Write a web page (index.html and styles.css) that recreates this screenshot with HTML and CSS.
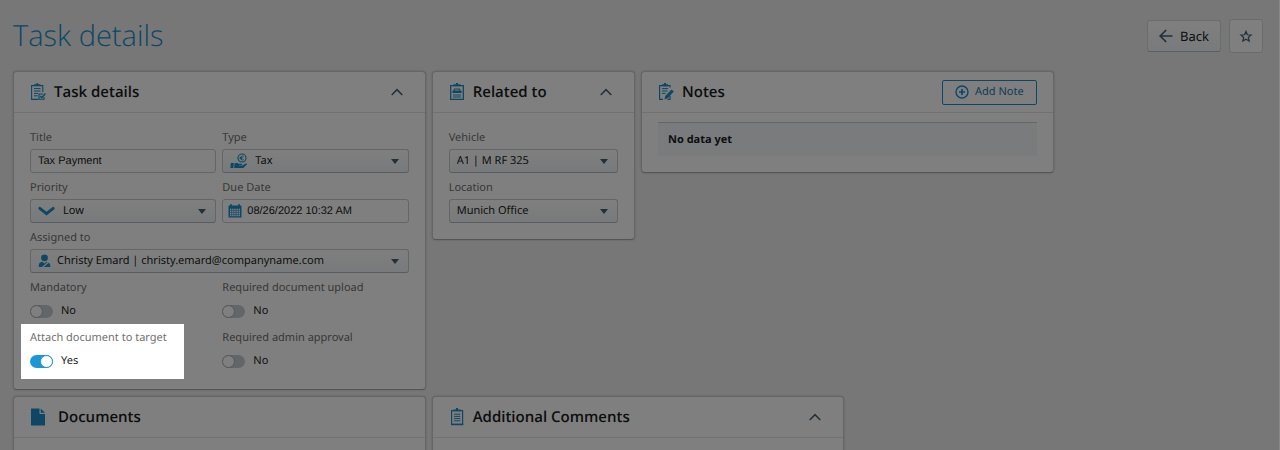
FILE: index.html
```html
<!DOCTYPE html>
<html lang="en">
<head>
<meta charset="utf-8">
<title>Task details</title>
<link rel="stylesheet" href="styles.css">
</head>
<body>
<main class="page">
  <header class="page-header">
    <h1 class="page-title">Task details</h1>
    <div class="page-actions">
      <button class="btn btn-back" type="button">
        <svg width="14" height="14" viewBox="0 0 14 14" fill="none" stroke="#456074" stroke-width="1.7"><path d="M13.5 7H1.2M7.2 1L1.2 7l6 6"/></svg>
        Back
      </button>
      <button class="btn btn-star" type="button" aria-label="Favourite">
        <svg width="14" height="14" viewBox="0 0 14 14" fill="none" stroke="#456074" stroke-width="1.2" stroke-linejoin="miter"><path d="M7 2.400l1.400 3.400 3.700.3-2.800 2.400.9 3.600L7 10.200l-3.200 1.900.9-3.600L1.900 6.100l3.700-.3z"/></svg>
      </button>
    </div>
  </header>

  <div class="cards">
    <section class="card card-wide">
      <header class="card-header">
        <svg class="card-icon" width="16" height="18" viewBox="0 0 16 18" fill="none" stroke="#1a8fcb" stroke-width="1.1"><path d="M8.500 16.400H1.600V2.600h11.200V9"/><path d="M4 2.200h6.400M6.200 1h2" stroke-width="1.700"/><path d="M4 5.600h6.500M4 8h6.500M4 10.400h4M4 12.800h3.500" stroke-width="1"/><path d="M13 11H9v5.300h5V14"/><path d="M10.200 13l1.600 1.700 3.600-4.200" stroke-width="1.400"/></svg>
        <h2 class="card-title">Task details</h2>
        <button class="collapse" type="button" aria-label="Collapse task details"><svg width="12" height="8" viewBox="0 0 12 8"><path d="M.7 7L6 1.6 11.3 7"/></svg></button>
      </header>
      <div class="card-body fields">
        <div class="field">
          <label class="label" for="title">Title</label>
          <input class="control plain" id="title" type="text" value="Tax Payment">
        </div>
        <div class="field">
          <label class="label" for="type">Type</label>
          <div class="control-wrap">
            <svg class="control-icon" width="18" height="16" viewBox="0 0 18 16"><circle cx="12" cy="5" r="4" fill="none" stroke="#1a8fcb" stroke-width="1.1"/><path d="M13.7 3.4a2 2 0 1 0 0 3.2M9.7 4.6h3M9.7 5.6h2.6" fill="none" stroke="#1a8fcb" stroke-width=".9"/><path d="M.8 10h3.1l-.5 5H.3zM4.5 10.4c2-1 3.1-.4 4.4.4h2.7c.9.1.8 1.2 0 1.3H9v.5h3.4l3.4-2c1-.4 1.5.4.8 1.1L13.3 15H4.2z" fill="#1a8fcb"/></svg>
            <select class="control select has-wide-icon" id="type"><option>Tax</option></select>
          </div>
        </div>
        <div class="field">
          <label class="label" for="priority">Priority</label>
          <div class="control-wrap">
            <svg class="control-icon" width="17" height="16" viewBox="0 0 17 16" fill="none" stroke="#1a8fcb" stroke-width="2.800"><path d="M1.800 5.300l6.700 5.400 6.700-5.400" stroke-linejoin="miter" stroke-linecap="round"/></svg>
            <select class="control select has-wide-icon" id="priority"><option>Low</option></select>
          </div>
        </div>
        <div class="field">
          <label class="label" for="due">Due Date</label>
          <div class="control-wrap">
            <svg class="control-icon calendar" width="14" height="14" viewBox="0 0 14 14"><path d="M.5 1.5h13v12H.5z" fill="#1a8fcb"/><path d="M3 0v3M11 0v3" stroke="#1a8fcb" stroke-width="1.5"/><path d="M2 5.500h10M2 7.500h10M2 9.500h10M2 11.500h10" stroke="#fff" stroke-width="1.300" stroke-dasharray="1.400 .750"/></svg>
            <input class="control plain has-icon" id="due" type="text" value="08/26/2022 10:32 AM">
          </div>
        </div>
        <div class="field field-full">
          <label class="label" for="assignee">Assigned to</label>
          <div class="control-wrap">
            <svg class="control-icon" width="14" height="14" viewBox="0 0 14 14" fill="#1a8fcb"><circle cx="6.500" cy="3.800" r="3.400"/><path d="M.8 13c-.3-3.500 1-5 3.500-5.200l2.200 1.700 2.200-1.700 1 .2L4 13zM5.800 13l5-4.300c1.200.8 1.600 2.200 1.500 4.300z"/></svg>
            <select class="control select has-icon" id="assignee"><option>Christy Emard | christy.emard@companyname.com</option></select>
          </div>
        </div>
        <div class="field">
          <span class="label" id="mandatory-label">Mandatory</span>
          <label class="switch"><input type="checkbox" role="switch" class="toggle" aria-labelledby="mandatory-label">No</label>
        </div>
        <div class="field">
          <span class="label" id="upload-label">Required document upload</span>
          <label class="switch"><input type="checkbox" role="switch" class="toggle" aria-labelledby="upload-label">No</label>
        </div>
        <div class="field spotlight">
          <span class="label" id="attach-label">Attach document to target</span>
          <label class="switch"><input type="checkbox" role="switch" class="toggle" aria-labelledby="attach-label" checked>Yes</label>
        </div>
        <div class="field">
          <span class="label" id="approval-label">Required admin approval</span>
          <label class="switch"><input type="checkbox" role="switch" class="toggle" aria-labelledby="approval-label">No</label>
        </div>
      </div>
    </section>

    <section class="card">
      <header class="card-header">
        <svg class="card-icon" width="16" height="18" viewBox="0 0 16 18" fill="none" stroke="#1a8fcb" stroke-width="1.3"><path d="M1.700 2.600h12.600v13.800H1.700z"/><path d="M4.500 2.300h7M7 1h2" stroke-width="2"/><path d="M5.300 5.500h5.400l1.100 1.900.8.600v2H3.400V8l.8-.6z" fill="#1a8fcb" stroke="none"/><path d="M6 6.500h4l.5 1h-5z" fill="#fff" stroke="none"/><path d="M4 12h8M4 14h8" stroke-width="1"/></svg>
        <h2 class="card-title">Related to</h2>
        <button class="collapse" type="button" aria-label="Collapse related to"><svg width="12" height="8" viewBox="0 0 12 8"><path d="M.7 7L6 1.6 11.3 7"/></svg></button>
      </header>
      <div class="card-body fields">
        <div class="field field-full">
          <label class="label" for="vehicle">Vehicle</label>
          <div class="control-wrap"><select class="control select" id="vehicle"><option>A1 | M RF 325</option></select></div>
        </div>
        <div class="field field-full">
          <label class="label" for="location">Location</label>
          <div class="control-wrap"><select class="control select" id="location"><option>Munich Office</option></select></div>
        </div>
      </div>
    </section>

    <section class="card card-wide">
      <header class="card-header">
        <svg class="card-icon" width="16" height="18" viewBox="0 0 16 18" fill="none" stroke="#1a8fcb" stroke-width="1.200"><path d="M12 4.500V2.600H1.600v13.800H5M9.500 16.400H12V13"/><path d="M4 2.200h6M6 1h2" stroke-width="2"/><path d="M4 5.600h6M4 8h5.500M4 10.400h3.500" stroke-width="1"/><path d="M13.500 6.500l2.300 2-6 6.700-3.300 1.300.8-3.400z" fill="#1a8fcb" stroke="none"/></svg>
        <h2 class="card-title">Notes</h2>
        <button class="btn-outline" type="button">
          <svg width="14" height="14" viewBox="0 0 14 14" fill="none" stroke="#1a8fcb" stroke-width="1.400"><circle cx="7" cy="7" r="6"/><path d="M7 4v6M4 7h6" stroke-width="1.700"/></svg>
          Add Note
        </button>
      </header>
      <div class="card-body notes-body">
        <p class="empty">No data yet</p>
      </div>
    </section>

    <section class="card card-wide">
      <header class="card-header documents-header">
        <svg class="card-icon" width="16" height="18" viewBox="0 0 16 18" fill="#1a8fcb"><path d="M1 .500h8.500V6H15v11.500H1z"/><path d="M10.700.500L15 4.800h-4.300z"/></svg>
        <h2 class="card-title">Documents</h2>
      </header>
      <div class="card-body"></div>
    </section>

    <section class="card card-wide">
      <header class="card-header">
        <svg class="card-icon" width="16" height="18" viewBox="0 0 16 18" fill="none" stroke="#1a8fcb" stroke-width="1.200"><path d="M2.600 2.600h11v13.800h-11z"/><path d="M2 16.500h12.200" stroke-width="1.500"/><path d="M4.500 2.300h7.200M7 1h2" stroke-width="1.800"/><path d="M5 6.200h6.300M5 8.400h6.300M5 10.600h6.300M5 12.800h6.300" stroke-width="1"/></svg>
        <h2 class="card-title">Additional Comments</h2>
        <button class="collapse" type="button" aria-label="Collapse additional comments"><svg width="12" height="8" viewBox="0 0 12 8"><path d="M.7 7L6 1.600 11.300 7"/></svg></button>
      </header>
      <div class="card-body"></div>
    </section>
  </div>
</main>
</body>
</html>
```

FILE: styles.css
```css
*,
*::before,
*::after {
  box-sizing: border-box;
}

body {
  margin: 0;
  font-family: "Noto Sans", "Open Sans", sans-serif;
  font-size: 11px;
  line-height: 18px;
  text-rendering: geometricPrecision;
  color: #181d21;
  background: #eee;
}

button,
input,
select {
  font: inherit;
  color: inherit;
  text-rendering: inherit;
}

svg {
  flex: none;
}

.page {
  height: 100vh;
  overflow: hidden;
  padding: 19px 16px 0 13px;
  border-right: 1px solid #888;
}

.page-header {
  display: flex;
  justify-content: space-between;
  align-items: flex-start;
  margin-bottom: 18px;
}

.page-title {
  margin: 0;
  font-family: "Open Sans", sans-serif;
  font-size: 29px;
  font-weight: 300;
  line-height: 34px;
  color: #1a8fcb;
}

.page-actions {
  display: flex;
  align-items: center;
  gap: 8px;
}

.btn {
  display: flex;
  align-items: center;
  justify-content: center;
  height: 34px;
  padding: 0;
  border: 1px solid #d4d8dc;
  border-radius: 3px;
  background: #fff;
}

.btn-back {
  gap: 7px;
  height: 32px;
  padding: 0 11px;
  border-bottom-color: #b4bec8;
  background: linear-gradient(#fff, #f3f5f7);
  font-size: 13px;
}

.btn-star {
  width: 34px;
}

.cards {
  display: grid;
  grid-template-columns: repeat(6, minmax(0, 1fr));
  align-items: start;
  gap: 6px;
}

.card {
  border: 1px solid #ccc;
  border-bottom-color: #aaa;
  border-radius: 4px;
  background: #fff;
  box-shadow: 0 0 2px rgba(0, 0, 0, 0.25);
}

.card-wide {
  grid-column: span 2;
}

.card-header {
  display: flex;
  align-items: center;
  gap: 8px;
  height: 41px;
  padding: 0 16px;
  border-bottom: 1px solid #e2e2e2;
}

.documents-header {
  gap: 12px;
}

.card-title {
  flex: 1;
  margin: 0;
  font-family: "Open Sans", sans-serif;
  font-size: 15px;
  font-weight: 600;
  line-height: 20px;
}

.collapse {
  display: flex;
  align-items: center;
  justify-content: center;
  width: 24px;
  height: 24px;
  padding: 0;
  border: 0;
  background: none;
}

.collapse path {
  fill: none;
  stroke: #456074;
  stroke-width: 1.5;
}

.card-body {
  min-height: 40px;
  padding: 16px;
}

.fields {
  display: grid;
  grid-template-columns: 1fr 1fr;
  gap: 6px;
}

.field {
  display: flex;
  flex-direction: column;
  gap: 2px;
}

.field-full {
  grid-column: 1 / -1;
}

.label {
  color: #707070;
}

.control-wrap {
  display: grid;
  position: relative;
}

.control {
  width: 100%;
  height: 24px;
  padding: 0 7px;
  border: 1px solid #c6cacd;
  border-radius: 3px;
  background: #fff;
}

.plain {
  font-family: "Liberation Sans", Arial, sans-serif;
}

.select {
  appearance: none;
  border-bottom-color: #aeb8c2;
  background: linear-gradient(#fff, #f1f4f7);
}

.control-wrap:has(.select)::after {
  content: "";
  position: absolute;
  top: 10px;
  right: 10px;
  border: 4px solid transparent;
  border-top: 5px solid #456074;
  border-bottom: 0;
  pointer-events: none;
}

.control-icon {
  position: absolute;
  top: 50%;
  left: 8px;
  transform: translateY(-50%);
  pointer-events: none;
}

.calendar {
  left: 6px;
}

.has-icon {
  padding-left: 26px;
}

.plain.has-icon {
  padding-left: 24px;
}

.has-wide-icon {
  padding-left: 32px;
}

.switch {
  display: flex;
  align-items: center;
  gap: 8px;
  height: 24px;
}

.toggle {
  appearance: none;
  display: flex;
  width: 23px;
  height: 13px;
  margin: 0;
  border-radius: 7px;
  background: #c4ccd2;
}

.toggle::before {
  content: "";
  width: 13px;
  height: 13px;
  border: 1px solid #a4aeb6;
  border-radius: 50%;
  background: #fff;
}

.toggle:checked {
  justify-content: flex-end;
  background: #1e96d4;
}

.toggle:checked::before {
  border-color: #1e96d4;
}

.spotlight {
  position: relative;
}

/* Dims everything outside the highlighted field */
.spotlight::after {
  content: "";
  position: absolute;
  inset: -5px 32px -6px -9px;
  z-index: 10;
  box-shadow: 0 0 0 200vmax rgba(0, 0, 0, 0.5);
  pointer-events: none;
}

.notes-body {
  padding-top: 9px;
}

.empty {
  margin: 0;
  padding: 8px 10px;
  border-top: 1px solid #ccc;
  background: #f4f6fa;
  font-weight: 700;
  line-height: 17px;
}

.btn-outline {
  display: flex;
  align-items: center;
  gap: 6px;
  height: 25px;
  padding: 0 12px;
  border: 1px solid #1a8fcb;
  border-radius: 2px;
  background: #fff;
  color: #1a78b4;
}
```
